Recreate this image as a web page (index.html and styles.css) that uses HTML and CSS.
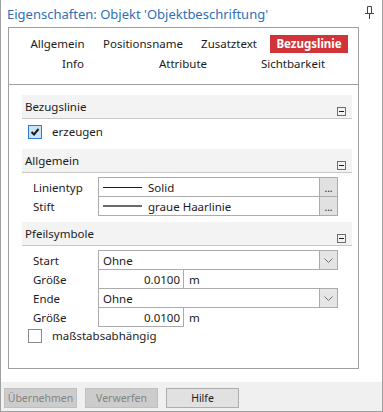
FILE: index.html
```html
<!DOCTYPE html>
<html lang="de">
<head>
    <meta charset="UTF-8">
    <title>Eigenschaften</title>
    <link rel="stylesheet" href="styles.css">
</head>
<body>
    <div class="window">
        <div class="titlebar">
            <span class="title">Eigenschaften: Objekt 'Objektbeschriftung'</span>
            <svg class="pin" width="9" height="13" viewBox="0 0 9 13">
                <path d="M2.5 0.5h4M2.5 0.5v7M6.5 0.5v7M0 7.5h9M4.5 7.5v5.5" stroke="#444" stroke-width="1" fill="none"/>
            </svg>
        </div>

        <div class="panel">
            <div class="tabs">
                <div class="tab-row first">
                    <span class="tab">Allgemein</span>
                    <span class="tab">Positionsname</span>
                    <span class="tab">Zusatztext</span>
                    <span class="tab active">Bezugslinie</span>
                </div>
                <div class="tab-row second">
                    <span class="tab">Info</span>
                    <span class="tab">Attribute</span>
                    <span class="tab">Sichtbarkeit</span>
                </div>
            </div>

            <div class="content">
                <div class="section-head">
                    <span>Bezugslinie</span>
                    <span class="collapse"></span>
                </div>
                <div class="check-row">
                    <span class="check checked">
                        <svg width="10" height="10" viewBox="0 0 10 10"><path d="M1.5 5l2.5 2.5 4.5-5.5" stroke="#1e1e1e" stroke-width="2" fill="none"/></svg>
                    </span>
                    <span>erzeugen</span>
                </div>

                <div class="section-head">
                    <span>Allgemein</span>
                    <span class="collapse"></span>
                </div>
                <div class="fields">
                    <div class="field-row">
                        <span class="label">Linientyp</span>
                        <div class="box">
                            <span class="line-sample thin"></span>
                            <span class="value">Solid</span>
                            <span class="more">...</span>
                        </div>
                    </div>
                    <div class="field-row">
                        <span class="label">Stift</span>
                        <div class="box">
                            <span class="line-sample thick"></span>
                            <span class="value">graue Haarlinie</span>
                            <span class="more">...</span>
                        </div>
                    </div>
                </div>

                <div class="section-head spaced">
                    <span>Pfeilsymbole</span>
                    <span class="collapse"></span>
                </div>
                <div class="fields">
                    <div class="field-row">
                        <span class="label">Start</span>
                        <div class="box">
                            <span class="value select">Ohne</span>
                            <span class="drop">
                                <svg width="9" height="5" viewBox="0 0 9 5"><path d="M0.5 0.5l4 4 4-4" stroke="#707070" fill="none"/></svg>
                            </span>
                        </div>
                    </div>
                    <div class="field-row">
                        <span class="label">Größe</span>
                        <div class="box number">0.0100</div>
                        <span class="unit">m</span>
                    </div>
                    <div class="field-row">
                        <span class="label">Ende</span>
                        <div class="box">
                            <span class="value select">Ohne</span>
                            <span class="drop">
                                <svg width="9" height="5" viewBox="0 0 9 5"><path d="M0.5 0.5l4 4 4-4" stroke="#707070" fill="none"/></svg>
                            </span>
                        </div>
                    </div>
                    <div class="field-row">
                        <span class="label">Größe</span>
                        <div class="box number">0.0100</div>
                        <span class="unit">m</span>
                    </div>
                </div>
                <div class="check-row last">
                    <span class="check"></span>
                    <span>maßstabsabhängig</span>
                </div>
            </div>
        </div>

        <div class="footer">
            <button class="btn" disabled>Übernehmen</button>
            <button class="btn" disabled>Verwerfen</button>
            <button class="btn">Hilfe</button>
        </div>
    </div>
</body>
</html>
```

FILE: styles.css
```css
body {
    margin: 0;
    font-family: 'Noto Sans', 'Open Sans', sans-serif;
    font-size: 11.5px;
    color: #1b1b1b;
    background: white;
}
.window {
    width: 383px;
    height: 412px;
    box-sizing: border-box;
    border: 1px solid #a0a0a0;
    border-top: none;
    display: flex;
    flex-direction: column;
}
.titlebar {
    height: 27px;
    display: flex;
    align-items: center;
    justify-content: space-between;
    padding: 0 8px 0 6px;
}
.title {
    font-size: 13px;
    color: #2f6fba;
}
.pin {
    align-self: flex-start;
    margin-top: 6px;
}
.panel {
    width: 351px;
    height: 342px;
    box-sizing: border-box;
    margin-left: 7px;
    border: 1px solid #a0a0a0;
}
.tabs {
    height: 57px;
    border-bottom: 1px solid #a0a0a0;
    padding-top: 7px;
    box-sizing: border-box;
}
.tab-row {
    display: grid;
    height: 18px;
}
.tab-row.first {
    grid-template-columns: 67px 90px 68px 78px;
    column-gap: 7px;
    padding-left: 15px;
}
.tab-row.second {
    grid-template-columns: repeat(3, 110px);
    padding-left: 9px;
    margin-top: 2px;
}
.tab {
    text-align: center;
    line-height: 18px;
    white-space: nowrap;
}
.tab.active {
    background: #d13438;
    color: white;
    font-weight: 700;
}
.content {
    padding: 10px 6px 0 13px;
}
.section-head {
    height: 24px;
    box-sizing: border-box;
    background: #f3f3f3;
    border-bottom: 1px solid #c9c9c9;
    display: flex;
    justify-content: space-between;
    padding: 0 6px 0 3px;
    line-height: 23px;
}
.section-head.spaced {
    margin-top: 6px;
}
.collapse {
    width: 9px;
    height: 9px;
    box-sizing: border-box;
    border: 1px solid #6d6d6d;
    align-self: flex-end;
    margin-bottom: 2px;
    display: flex;
    align-items: center;
    justify-content: center;
}
.collapse::after {
    content: "";
    width: 5px;
    height: 1px;
    background: #1b1b1b;
}
.check-row {
    height: 30px;
    display: flex;
    align-items: flex-start;
    padding: 6px 0 0 6px;
    box-sizing: border-box;
    gap: 10px;
    line-height: 14px;
}
.check-row.last {
    padding-top: 2px;
}
.check {
    width: 14px;
    height: 14px;
    box-sizing: border-box;
    border: 1px solid #8a8a8a;
    background: white;
    display: flex;
    align-items: center;
    justify-content: center;
}
.check.checked {
    border-color: #2c7ad0;
    background: #cce4f7;
}
.fields {
    margin-top: 4px;
}
.field-row {
    display: flex;
    align-items: center;
    height: 20px;
}
.field-row + .field-row {
    margin-top: -1px;
}
.label {
    width: 76px;
    padding-left: 11px;
    box-sizing: border-box;
}
.box {
    width: 240px;
    height: 20px;
    box-sizing: border-box;
    border: 1px solid #ababab;
    background: white;
    display: flex;
    align-items: center;
}
.line-sample {
    width: 39px;
    margin: 0 6px 0 4px;
}
.line-sample.thin {
    height: 1px;
    background: #1b1b1b;
}
.line-sample.thick {
    height: 2px;
    background: #6b6b6b;
}
.value {
    flex: 1;
    white-space: nowrap;
}
.value.select {
    padding-left: 4px;
}
.more {
    width: 18px;
    height: 18px;
    box-sizing: border-box;
    border-left: 1px solid #ababab;
    background: #e1e1e1;
    font-size: 10px;
    line-height: 20px;
    text-align: center;
}
.drop {
    width: 18px;
    height: 18px;
    box-sizing: border-box;
    border-left: 1px solid #ababab;
    background: #e5e5e5;
    display: flex;
    align-items: center;
    justify-content: center;
}
.box.number {
    width: 86px;
    justify-content: flex-end;
    padding-right: 3px;
}
.unit {
    margin-left: 5px;
}
.footer {
    margin-top: auto;
    height: 29px;
    box-sizing: border-box;
    background: #f0f0f0;
    padding: 6px 0 0 3px;
    display: flex;
    align-items: flex-start;
    gap: 8px;
}
.btn {
    width: 73px;
    height: 20px;
    font-family: inherit;
    font-size: 10.5px;
    background: #e1e1e1;
    border: 1px solid #adadad;
    color: #1b1b1b;
    padding: 0;
    white-space: nowrap;
    overflow: hidden;
}
.btn:disabled {
    background: #cccccc;
    border-color: #bfbfbf;
    color: #838383;
}
```
